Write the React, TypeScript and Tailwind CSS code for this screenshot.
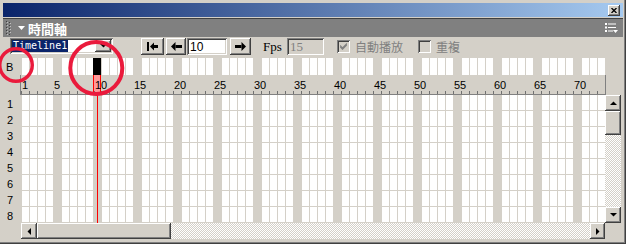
import React from "react";

const frames = Array.from({ length: 73 }, (_, i) => i + 1);
const rows = [1, 2, 3, 4, 5, 6, 7, 8];
const labels = [1, 5, 10, 15, 20, 25, 30, 35, 40, 45, 50, 55, 60, 65, 70];

// classic win32 bevels
const raised =
  "bg-[#d4d0c8] shadow-[inset_-1px_-1px_#404040,inset_1px_1px_#ffffff,inset_-2px_-2px_#808080,inset_2px_2px_#d4d0c8]";
const sunken =
  "shadow-[inset_1px_1px_#808080,inset_-1px_-1px_#ffffff,inset_2px_2px_#404040,inset_-2px_-2px_#d4d0c8]";
const checker =
  "bg-[conic-gradient(#d4d0c8_25%,#ffffff_0_50%,#d4d0c8_0_75%,#ffffff_0)] bg-[length:2px_2px]";

function Arrow({ dir }: { dir: "up" | "down" | "left" | "right" }) {
  const pts = {
    up: "0,4 7,4 3.5,0.5",
    down: "0,0 7,0 3.5,3.5",
    left: "4,0 4,7 0.5,3.5",
    right: "0,0 0,7 3.5,3.5",
  }[dir];
  const vert = dir === "up" || dir === "down";
  return (
    <svg width={vert ? 7 : 4} height={vert ? 4 : 7} viewBox={vert ? "0 0 7 4" : "0 0 4 7"}>
      <polygon points={pts} fill="#000" />
    </svg>
  );
}

function ScrollButton({ dir, className }: { dir: "up" | "down" | "left" | "right"; className: string }) {
  return (
    <div className={`flex items-center justify-center ${raised} ${className}`}>
      <Arrow dir={dir} />
    </div>
  );
}

function Checkbox({ checked }: { checked?: boolean }) {
  return (
    <div className={`flex h-[13px] w-[13px] items-center justify-center bg-[#d4d0c8] ${sunken}`}>
      {checked ? (
        <svg width="7" height="7" viewBox="0 0 7 7">
          <path d="M0 2.5 L2.5 5 L7 0.5 M0 3.8 L2.5 6.3 L7 1.8" stroke="#808080" strokeWidth="1.1" fill="none" />
        </svg>
      ) : null}
    </div>
  );
}

export default function App() {
  return (
    <div className="relative flex h-[244px] w-[626px] flex-col overflow-hidden bg-[#d4d0c8] font-['Liberation_Sans',sans-serif] text-black shadow-[inset_-1px_-1px_#404040,inset_-2px_-2px_#808080]">
      {/* title + panel header */}
      <div className="px-[3px] pt-[3px]">
        <div className="flex h-[14px] items-start justify-end bg-[linear-gradient(to_right,#0a246a,#a6caf0)] pr-[3px] pt-[2px]">
          <div className={`flex h-[11px] w-[12px] items-center justify-center ${raised}`}>
            <svg width="6" height="5" viewBox="0 0 6 5">
              <path d="M0.5 0 L5.5 5 M5.5 0 L0.5 5" stroke="#000" strokeWidth="1.3" />
            </svg>
          </div>
        </div>
        <div className="h-px bg-[#d4d0c8]" />
        <div className="h-px bg-[#404040]" />
        <div className="flex h-[18px] items-center bg-[#808080] pl-[3px] pr-[5px]">
          <svg width="5" height="14" viewBox="0 0 5 14">
            {[0, 1, 2, 3, 4].map((i) => (
              <g key={i}>
                <rect x="0" y={i * 3} width="1" height="1" fill="#404040" />
                <rect x="1" y={i * 3 + 1} width="1" height="1" fill="#c0c0c0" />
                <rect x="3" y={i * 3 + 1} width="1" height="1" fill="#404040" />
                <rect x="4" y={i * 3 + 2} width="1" height="1" fill="#c0c0c0" />
              </g>
            ))}
          </svg>
          <svg className="ml-[7px]" width="7" height="4" viewBox="0 0 7 4">
            <polygon points="0,0 7,0 3.5,4" fill="#fff" />
          </svg>
          <span className="ml-[3px] font-['Noto_Sans_CJK_TC',sans-serif] text-[13px] leading-none font-bold text-white">
            時間軸
          </span>
          <svg className="ml-auto" width="13" height="10" viewBox="0 0 13 10">
            <rect x="0" y="0" width="2" height="2" fill="#fff" />
            <rect x="3" y="0.5" width="8" height="1" fill="#fff" />
            <rect x="0" y="3.5" width="2" height="2" fill="#fff" />
            <rect x="3" y="4" width="8" height="1" fill="#fff" />
            <rect x="0" y="7" width="2" height="2" fill="#fff" />
            <rect x="3" y="7.5" width="5" height="1" fill="#fff" />
            <polygon points="8,7 13,7 10.5,10" fill="#fff" />
          </svg>
        </div>
      </div>

      {/* toolbar */}
      <div className="flex h-[21px] items-start pl-[10px] pt-px">
        <div className={`flex h-[16px] w-[103px] bg-white p-[2px] ${sunken}`}>
          <span className="h-[12px] bg-[#0a246a] px-px font-['DejaVu_Sans_Mono',monospace] text-[10px] leading-[12px] text-white">
            Timeline1
          </span>
          <div className={`ml-auto flex h-[12px] w-[16px] items-center justify-center ${raised}`}>
            <Arrow dir="down" />
          </div>
        </div>
        <div className={`ml-[28px] flex h-[17px] w-[23px] items-center justify-center ${raised}`}>
          <svg width="11" height="9" viewBox="0 0 11 9">
            <rect x="0" y="0" width="2" height="9" fill="#000" />
            <polygon points="3,4.5 7,0.5 7,8.5" fill="#000" />
            <rect x="7" y="3" width="4" height="3" fill="#000" />
          </svg>
        </div>
        <div className={`ml-[2px] flex h-[17px] w-[20px] items-center justify-center ${raised}`}>
          <svg width="11" height="9" viewBox="0 0 11 9">
            <polygon points="0,4.5 4.5,0 4.5,9" fill="#000" />
            <rect x="4.5" y="3" width="6.5" height="3" fill="#000" />
          </svg>
        </div>
        <div className={`ml-px flex h-[17px] w-[40px] items-center bg-white pl-[3px] text-[12px] ${sunken}`}>10</div>
        <div className={`ml-[3px] flex h-[17px] w-[21px] items-center justify-center ${raised}`}>
          <svg width="11" height="9" viewBox="0 0 11 9">
            <polygon points="11,4.5 6.5,0 6.5,9" fill="#000" />
            <rect x="0" y="3" width="6.5" height="3" fill="#000" />
          </svg>
        </div>
        <span className="ml-[12px] mt-[2px] w-[24px] font-['Liberation_Serif',serif] text-[13px] leading-[13px]">Fps</span>
        <div
          className={`flex h-[17px] w-[37px] items-center bg-[#d4d0c8] pl-[3px] font-['Liberation_Serif',serif] text-[13px] text-[#808080] ${sunken}`}
        >
          15
        </div>
        <div className="ml-[13px] mt-[2px]">
          <Checkbox checked />
        </div>
        <span className="ml-[5px] mt-[2px] font-['Noto_Sans_CJK_TC',sans-serif] text-[12px] leading-[13px] text-[#808080]">
          自動播放
        </span>
        <div className="ml-[15px] mt-[2px]">
          <Checkbox />
        </div>
        <span className="ml-[5px] mt-[2px] font-['Noto_Sans_CJK_TC',sans-serif] text-[12px] leading-[13px] text-[#808080]">
          重複
        </span>
      </div>

      {/* frame row */}
      <div className="flex h-[17px]">
        <div className="w-[21px] pl-[6px] pt-[4px] text-[11px] leading-none">B</div>
        {frames.map((n) => (
          <div
            key={n}
            className={
              n === 10
                ? "h-full w-[8px] bg-black"
                : n % 5 === 0
                  ? "h-full w-[8px] bg-[#d4d0c8]"
                  : "h-full w-[8px] border-l border-[#d4d0c8] bg-white"
            }
          />
        ))}
      </div>

      {/* ruler */}
      <div className="flex h-[20px]">
        <div className="w-[20px]" />
        <div className="flex w-[586px] overflow-hidden border-x border-b border-[#808080]">
          {frames.map((n) => (
            <div
              key={n}
              className={
                n === 10
                  ? "flex h-full w-[8px] shrink-0 flex-col whitespace-nowrap border-x border-[#ff0000] bg-[#ff9999]"
                  : "flex h-full w-[8px] shrink-0 flex-col whitespace-nowrap"
              }
            >
              <span className="h-[15px] pl-px pt-[5px] text-[11px] leading-none">
                {labels.includes(n) ? n : ""}
              </span>
              <span className="mt-auto h-[3px] w-px bg-[#707070]" />
            </div>
          ))}
        </div>
      </div>

      {/* grid */}
      <div className="flex h-[128px]">
        <div className="flex w-[21px] flex-col">
          {rows.map((r) => (
            <div key={r} className="h-[16px] pl-[7px] pt-[4px] text-[11px] leading-none">
              {r}
            </div>
          ))}
        </div>
        {frames.map((n) =>
          n === 10 ? (
            <div key={n} className="h-full w-[8px] bg-[#d4d0c8] pl-[4px]">
              <div className="h-full w-px bg-[#ff0000]" />
            </div>
          ) : n % 5 === 0 ? (
            <div key={n} className="h-full w-[8px] bg-[#d4d0c8]" />
          ) : (
            <div key={n} className="flex h-full w-[8px] flex-col border-l border-[#d4d0c8]">
              {rows.map((r) => (
                <div key={r} className="h-[16px] border-b border-[#d4d0c8] bg-white" />
              ))}
            </div>
          ),
        )}
        <div className="flex w-[16px] flex-col">
          <ScrollButton dir="up" className="h-[16px] w-[16px]" />
          <div className={`h-[24px] w-[16px] ${raised}`} />
          <div className={`flex-1 ${checker}`} />
          <ScrollButton dir="down" className="h-[16px] w-[16px]" />
        </div>
      </div>

      {/* horizontal scrollbar */}
      <div className="flex h-[16px]">
        <div className="w-[21px]" />
        <ScrollButton dir="left" className="h-[16px] w-[16px]" />
        <div className={`h-[16px] w-[134px] ${raised}`} />
        <div className={`w-[419px] ${checker}`} />
        <ScrollButton dir="right" className="h-[16px] w-[15px]" />
      </div>

      {/* annotation circles */}
      <svg className="pointer-events-none absolute left-0 top-0" width="626" height="244" viewBox="0 0 626 244">
        <circle cx="16" cy="65" r="16.25" fill="none" stroke="#ea1a3c" strokeWidth="3.5" />
        <circle cx="96.3" cy="68" r="26" fill="none" stroke="#ea1a3c" strokeWidth="4" />
      </svg>
    </div>
  );
}
